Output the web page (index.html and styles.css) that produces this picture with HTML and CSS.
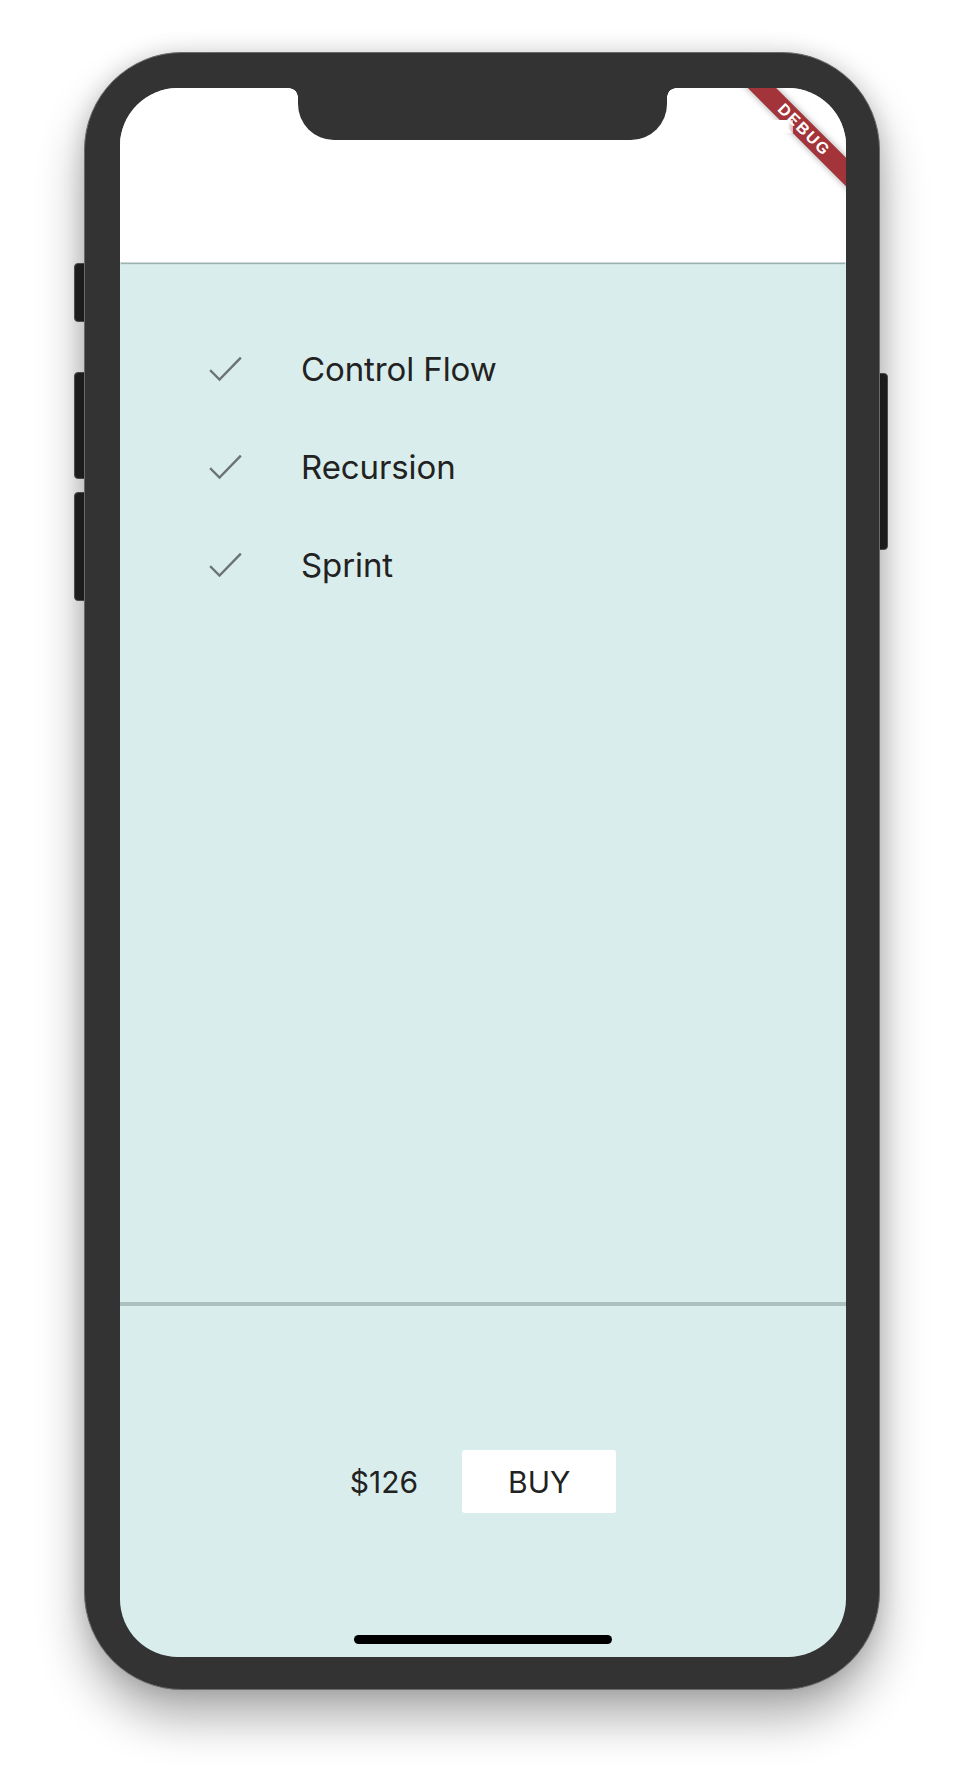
FILE: index.html
```html
<!DOCTYPE html>
<html lang="en">
<head>
<meta charset="utf-8">
<title>Course</title>
<link rel="stylesheet" href="styles.css">
</head>
<body>
<div class="phone">
  <span class="side-btn side-btn--mute"></span>
  <span class="side-btn side-btn--vol-up"></span>
  <span class="side-btn side-btn--vol-down"></span>
  <span class="side-btn side-btn--power"></span>
  <div class="screen">
    <header class="app-header"></header>
    <ul class="topic-list">
      <li class="topic">
        <svg class="check" viewBox="0 0 33 26" width="33" height="26"><polyline points="2,15 10.5,23.5 31,2.5"/></svg>
        <span class="topic-name">Control Flow</span>
      </li>
      <li class="topic">
        <svg class="check" viewBox="0 0 33 26" width="33" height="26"><polyline points="2,15 10.5,23.5 31,2.5"/></svg>
        <span class="topic-name">Recursion</span>
      </li>
      <li class="topic">
        <svg class="check" viewBox="0 0 33 26" width="33" height="26"><polyline points="2,15 10.5,23.5 31,2.5"/></svg>
        <span class="topic-name">Sprint</span>
      </li>
    </ul>
    <div class="divider"></div>
    <footer class="checkout">
      <span class="price">$126</span>
      <button class="buy-btn" type="button">BUY</button>
    </footer>
    <div class="notch"></div>
    <div class="debug-banner"><span>DEBUG</span></div>
    <div class="status-glitch"></div>
    <div class="home-indicator"></div>
  </div>
</div>
</body>
</html>
```
FILE: styles.css
```css
* { box-sizing: border-box; }

html {
  margin: 0;
  padding: 0;
  background: #ffffff;
}

body {
  margin: 0;
  width: 964px;
  height: 1778px;
  padding: 52px 0 0 84px;
  font-family: "Inter", "Roboto", "Liberation Sans", sans-serif;
  overflow: hidden;
}

.phone {
  position: relative;
  width: 796px;
  height: 1638px;
  padding: 35px 33px 32px 35px;
  background: #333333;
  border: 1px solid #6a6a6a;
  border-radius: 98px;
  box-shadow: 0 28px 48px rgba(0, 0, 0, 0.32), 0 0 22px rgba(0, 0, 0, 0.14);
}

.side-btn {
  position: absolute;
  z-index: -1;
  background: #232323;
  border: 1px solid #5a5a5a;
  border-radius: 4px;
}
.side-btn--mute { left: -11px; top: 210px; width: 16px; height: 59px; }
.side-btn--vol-up { left: -11px; top: 319px; width: 16px; height: 107px; }
.side-btn--vol-down { left: -11px; top: 439px; width: 16px; height: 109px; }
.side-btn--power { right: -9px; top: 320px; width: 14px; height: 177px; }

.screen {
  position: relative;
  width: 726px;
  height: 1569px;
  background: #d9eeec;
  border-radius: 58px;
  overflow: hidden;
  display: flex;
  flex-direction: column;
}

.app-header {
  position: relative;
  z-index: 1;
  height: 174px;
  flex: 0 0 174px;
  background: #ffffff;
  box-shadow: 0 1px 0 #d0d8d7, 0 3px 1px -1px rgba(110, 140, 136, 0.6);
}

.topic-list {
  list-style: none;
  margin: 0;
  padding: 58px 0 0 89px;
  flex: 1 1 auto;
}

.topic {
  height: 98px;
  display: flex;
  align-items: center;
}

.check {
  flex: 0 0 33px;
  fill: none;
  stroke: #6c7473;
  stroke-width: 2.4;
  stroke-linecap: square;
  stroke-linejoin: miter;
}

.topic-name {
  margin-left: 59px;
  font-size: 33px;
  color: #222222;
  letter-spacing: -0.1px;
}

.divider {
  flex: 0 0 4px;
  height: 4px;
  background: #adc2bf;
}

.checkout {
  flex: 0 0 351px;
  height: 351px;
  display: flex;
  align-items: center;
  justify-content: center;
  gap: 44px;
}

.price {
  font-size: 30px;
  color: #222222;
}

.buy-btn {
  width: 154px;
  height: 63px;
  border: none;
  border-radius: 3px;
  background: #ffffff;
  font-family: inherit;
  font-size: 30px;
  color: #222222;
  padding: 0;
}

.notch {
  position: absolute;
  z-index: 3;
  left: 178px;
  top: 0;
  width: 369px;
  height: 52px;
  background: #333333;
  border-radius: 0 0 36px 36px;
}
.notch::before,
.notch::after {
  content: "";
  position: absolute;
  top: 0;
  width: 9px;
  height: 9px;
}
.notch::before {
  left: -9px;
  background: radial-gradient(circle at 0 100%, transparent 8.5px, #333333 9px);
}
.notch::after {
  right: -9px;
  background: radial-gradient(circle at 100% 100%, transparent 8.5px, #333333 9px);
}

.debug-banner {
  position: absolute;
  z-index: 2;
  left: 584px;
  top: 32px;
  width: 200px;
  height: 20px;
  background: #a3343a;
  transform: rotate(45deg);
  box-shadow: 0 0 7px rgba(0, 0, 0, 0.35);
  display: flex;
  align-items: center;
  justify-content: center;
}
.debug-banner span {
  font-family: "Liberation Sans", "DejaVu Sans", sans-serif;
  font-weight: bold;
  font-size: 16px;
  letter-spacing: 1.8px;
  color: #ffffff;
  line-height: 1;
}

.status-glitch {
  position: absolute;
  z-index: 2;
  left: 646px;
  top: 32px;
  width: 27px;
  height: 13px;
  background: linear-gradient(90deg, #ffffff 80%, rgba(255, 255, 255, 0.6));
}

.home-indicator {
  position: absolute;
  z-index: 3;
  left: 234px;
  bottom: 13px;
  width: 258px;
  height: 9px;
  background: #000000;
  border-radius: 5px;
}
```
